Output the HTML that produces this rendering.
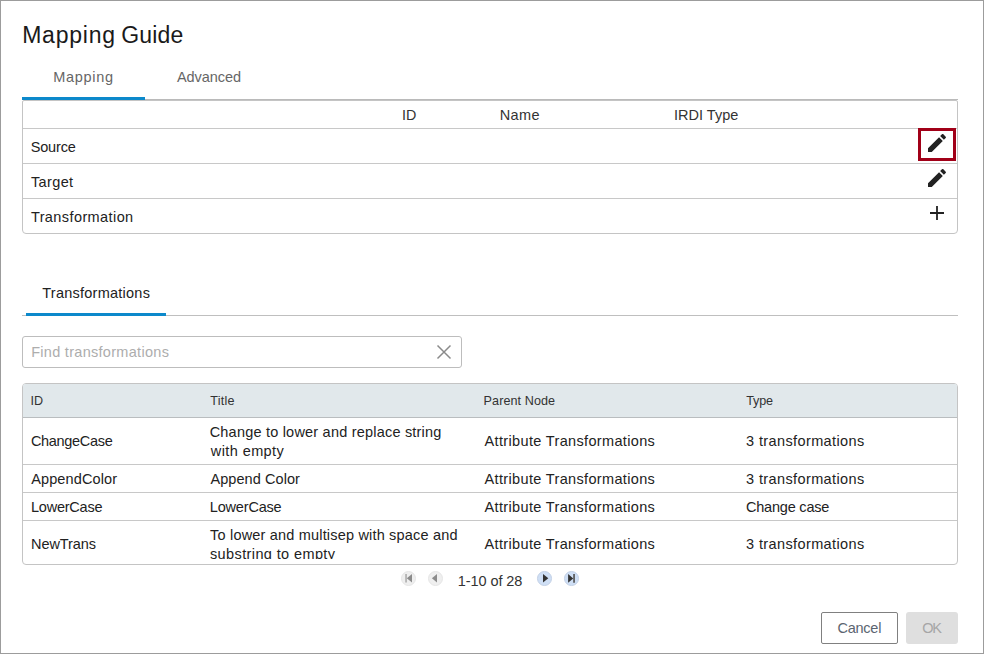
<!DOCTYPE html>
<html><head><meta charset="utf-8"><style>
html,body{margin:0;padding:0;background:#fff;}
body{width:984px;height:654px;position:relative;overflow:hidden;font-family:"Liberation Sans",sans-serif;}
.frame{position:absolute;left:0;top:0;width:984px;height:654px;box-sizing:border-box;border:1px solid #9c9c9c;}
.t{position:absolute;white-space:nowrap;}
.b{position:absolute;box-sizing:border-box;}
</style></head><body>
<div class="frame"></div>
<!-- tab bar 1 -->
<div class="b" style="left:22px;top:99px;width:936px;height:1px;background:#bababa"></div>
<div class="b" style="left:22px;top:97px;width:123px;height:3px;background:#0c89cb"></div>
<!-- table 1 -->
<div class="b" style="left:22px;top:100px;width:936px;height:134px;border:1px solid #c4c4c4;border-top-color:#c4c4c4;border-radius:2px 2px 4px 4px"></div>
<div class="b" style="left:23px;top:128px;width:934px;height:1px;background:#c8c8c8"></div>
<div class="b" style="left:23px;top:163px;width:934px;height:1px;background:#c8c8c8"></div>
<div class="b" style="left:23px;top:198px;width:934px;height:1px;background:#c8c8c8"></div>
<div class="b" style="left:918px;top:128px;width:38px;height:33px;border:3px solid #a10018"></div>
<svg style="position:absolute;left:925px;top:131px" width="24" height="24" viewBox="0 0 24 24"><path fill="#222" d="M3 17.25V21h3.75L17.81 9.94l-3.75-3.75L3 17.25zM20.71 7.04c.39-.39.39-1.02 0-1.41l-2.34-2.34c-.39-.39-1.02-.39-1.41 0l-1.83 1.83 3.75 3.75 1.83-1.830z"/></svg>
<svg style="position:absolute;left:925px;top:166px" width="24" height="24" viewBox="0 0 24 24"><path fill="#222" d="M3 17.25V21h3.75L17.81 9.94l-3.75-3.75L3 17.25zM20.71 7.04c.39-.39.39-1.02 0-1.41l-2.34-2.34c-.39-.39-1.02-.39-1.41 0l-1.83 1.830 3.75 3.75 1.83-1.83z"/></svg>
<svg style="position:absolute;left:925px;top:201px" width="24" height="24" viewBox="0 0 24 24"><path fill="#222" d="M19 12.9h-6.1V19h-1.8v-6.1H5v-1.8h6.1V5h1.8v6.1H19z"/></svg>
<!-- tab bar 2 -->
<div class="b" style="left:22px;top:315px;width:936px;height:1px;background:#bfbfbf"></div>
<div class="b" style="left:26px;top:313px;width:140px;height:3px;background:#0c89cb"></div>
<!-- search -->
<div class="b" style="left:22px;top:336px;width:440px;height:32px;border:1px solid #bdbdbd;border-radius:3px"></div>
<svg style="position:absolute;left:432px;top:340px" width="24" height="24" viewBox="0 0 24 24"><path stroke="#8a8a8a" stroke-width="1.45" d="M5.5 5.5L18.5 18.5M18.5 5.5L5.5 18.5"/></svg>
<!-- table 2 -->
<div class="b" style="left:22px;top:383px;width:936px;height:182px;border:1px solid #c4c4c4;border-radius:4px;background:#fff"></div>
<div class="b" style="left:23px;top:384px;width:934px;height:33px;background:#e1e8eb;border-radius:2px 2px 0 0"></div>
<div class="b" style="left:23px;top:417px;width:934px;height:1px;background:#b9bdbf"></div>
<div class="b" style="left:23px;top:464px;width:934px;height:1px;background:#c8c8c8"></div>
<div class="b" style="left:23px;top:492px;width:934px;height:1px;background:#c8c8c8"></div>
<div class="b" style="left:23px;top:520px;width:934px;height:1px;background:#c8c8c8"></div>
<div style="position:absolute;left:0;top:0;width:984px;height:559px;overflow:hidden">
<div class="t" style="left:31.04px;top:533.98px;font-size:14.50px;line-height:20px;color:#222;letter-spacing:-0.086px;">NewTrans</div>
<div class="t" style="left:210.11px;top:524.98px;font-size:14.50px;line-height:20px;color:#222;letter-spacing:0.182px;">To lower and multisep with space and</div>
<div class="t" style="left:209.97px;top:543.98px;font-size:14.50px;line-height:20px;color:#222;letter-spacing:0.386px;">substring to empty</div>
<div class="t" style="left:484.60px;top:533.98px;font-size:14.50px;line-height:20px;color:#222;letter-spacing:0.345px;">Attribute Transformations</div>
<div class="t" style="left:746.02px;top:533.98px;font-size:14.50px;line-height:20px;color:#222;letter-spacing:0.386px;">3 transformations</div>

</div>
<!-- pager -->
<div class="b" style="left:401px;top:570.5px;width:15px;height:15px;border-radius:50%;background:#efefef;border:0.6px solid #e6e6e6"></div>
<div class="b" style="left:428px;top:570.5px;width:15px;height:15px;border-radius:50%;background:#efefef;border:0.6px solid #e6e6e6"></div>
<div class="b" style="left:537px;top:570.8px;width:14.8px;height:14.8px;border-radius:50%;background:#cfdff5;border:0.6px solid #c3d1e6"></div>
<div class="b" style="left:564px;top:570.8px;width:14.8px;height:14.8px;border-radius:50%;background:#cfdff5;border:0.6px solid #c3d1e6"></div>
<svg style="position:absolute;left:401px;top:570px" width="15" height="16" viewBox="0 0 15 16"><path fill="#a8a8a8" d="M4.3 4.1h1.5v8.5H4.3z"/><path fill="#8c8c8c" d="M11 4.1v8.5L5.8 8.35z"/></svg>
<svg style="position:absolute;left:428px;top:570px" width="15" height="16" viewBox="0 0 15 16"><path fill="#8c8c8c" d="M9 4v8.5L3.9 8.25z"/></svg>
<svg style="position:absolute;left:537px;top:570px" width="15" height="16" viewBox="0 0 15 16"><path fill="#333" d="M6 4.1v8.4L11.3 8.3z"/></svg>
<svg style="position:absolute;left:564px;top:570px" width="15" height="16" viewBox="0 0 15 16"><path fill="#333" d="M4.1 4.1v8.6L9.2 8.4z"/><path fill="#555" d="M9.2 4.1h1.7v8.6H9.2z"/></svg>
<!-- buttons -->
<div class="b" style="left:821px;top:612px;width:77px;height:32px;border:1px solid #808080;border-radius:2px"></div>
<div class="b" style="left:906px;top:612px;width:52px;height:32px;background:#dfdfdf;border-radius:3px"></div>
<div class="t" style="left:22.16px;top:20.03px;font-size:23.00px;line-height:30px;color:#1a1a1a;letter-spacing:0.788px;">Mapping</div>
<div class="t" style="left:121.15px;top:20.03px;font-size:23.00px;line-height:30px;color:#1a1a1a;letter-spacing:0.172px;">Guide</div>
<div class="t" style="left:53.34px;top:67.18px;font-size:14.50px;line-height:20px;color:#666;letter-spacing:0.666px;">Mapping</div>
<div class="t" style="left:177.00px;top:67.18px;font-size:14.50px;line-height:20px;color:#666;letter-spacing:-0.073px;">Advanced</div>
<div class="t" style="left:401.91px;top:105.05px;font-size:14.30px;line-height:20px;color:#333;">ID</div>
<div class="t" style="left:499.74px;top:104.98px;font-size:14.50px;line-height:20px;color:#333;letter-spacing:0.357px;">Name</div>
<div class="t" style="left:673.90px;top:104.98px;font-size:14.50px;line-height:20px;color:#333;letter-spacing:0.037px;">IRDI Type</div>
<div class="t" style="left:30.67px;top:136.98px;font-size:14.50px;line-height:20px;color:#222;letter-spacing:-0.143px;">Source</div>
<div class="t" style="left:30.91px;top:171.98px;font-size:14.50px;line-height:20px;color:#222;letter-spacing:0.385px;">Target</div>
<div class="t" style="left:30.91px;top:206.98px;font-size:14.50px;line-height:20px;color:#222;letter-spacing:0.408px;">Transformation</div>
<div class="t" style="left:42.31px;top:282.98px;font-size:14.50px;line-height:20px;color:#222;letter-spacing:0.244px;">Transformations</div>
<div class="t" style="left:31.14px;top:341.98px;font-size:14.50px;line-height:20px;color:#adadad;letter-spacing:0.295px;">Find transformations</div>
<div class="t" style="left:30.47px;top:391.13px;font-size:12.60px;line-height:20px;color:#333;">ID</div>
<div class="t" style="left:210.35px;top:391.13px;font-size:12.60px;line-height:20px;color:#333;letter-spacing:0.236px;">Title</div>
<div class="t" style="left:483.59px;top:391.13px;font-size:12.60px;line-height:20px;color:#333;letter-spacing:0.083px;">Parent Node</div>
<div class="t" style="left:746.35px;top:391.13px;font-size:12.60px;line-height:20px;color:#333;letter-spacing:-0.220px;">Type</div>
<div class="t" style="left:30.88px;top:430.98px;font-size:14.50px;line-height:20px;color:#222;letter-spacing:-0.314px;">ChangeCase</div>
<div class="t" style="left:209.68px;top:422.48px;font-size:14.50px;line-height:20px;color:#222;letter-spacing:0.207px;">Change to lower and replace string</div>
<div class="t" style="left:210.80px;top:441.18px;font-size:14.50px;line-height:20px;color:#222;letter-spacing:0.410px;">with empty</div>
<div class="t" style="left:484.60px;top:430.98px;font-size:14.50px;line-height:20px;color:#222;letter-spacing:0.345px;">Attribute Transformations</div>
<div class="t" style="left:746.02px;top:430.98px;font-size:14.50px;line-height:20px;color:#222;letter-spacing:0.386px;">3 transformations</div>
<div class="t" style="left:31.20px;top:468.98px;font-size:14.50px;line-height:20px;color:#222;letter-spacing:0.121px;">AppendColor</div>
<div class="t" style="left:210.40px;top:468.98px;font-size:14.50px;line-height:20px;color:#222;letter-spacing:0.077px;">Append Color</div>
<div class="t" style="left:484.60px;top:468.98px;font-size:14.50px;line-height:20px;color:#222;letter-spacing:0.345px;">Attribute Transformations</div>
<div class="t" style="left:746.02px;top:468.98px;font-size:14.50px;line-height:20px;color:#222;letter-spacing:0.386px;">3 transformations</div>
<div class="t" style="left:31.04px;top:496.98px;font-size:14.50px;line-height:20px;color:#222;letter-spacing:-0.236px;">LowerCase</div>
<div class="t" style="left:209.84px;top:496.98px;font-size:14.50px;line-height:20px;color:#222;letter-spacing:-0.186px;">LowerCase</div>
<div class="t" style="left:484.60px;top:496.98px;font-size:14.50px;line-height:20px;color:#222;letter-spacing:0.345px;">Attribute Transformations</div>
<div class="t" style="left:745.88px;top:496.98px;font-size:14.50px;line-height:20px;color:#222;letter-spacing:-0.190px;">Change case</div>
<div class="t" style="left:457.64px;top:570.98px;font-size:14.50px;line-height:20px;color:#333;letter-spacing:-0.057px;">1-10 of 28</div>
<div class="t" style="left:837.48px;top:617.98px;font-size:14.50px;line-height:20px;color:#5b6571;letter-spacing:-0.240px;">Cancel</div>
<div class="t" style="left:922.27px;top:617.98px;font-size:14.50px;line-height:20px;color:#a6a6a6;letter-spacing:-1.210px;">OK</div>

</body></html>
